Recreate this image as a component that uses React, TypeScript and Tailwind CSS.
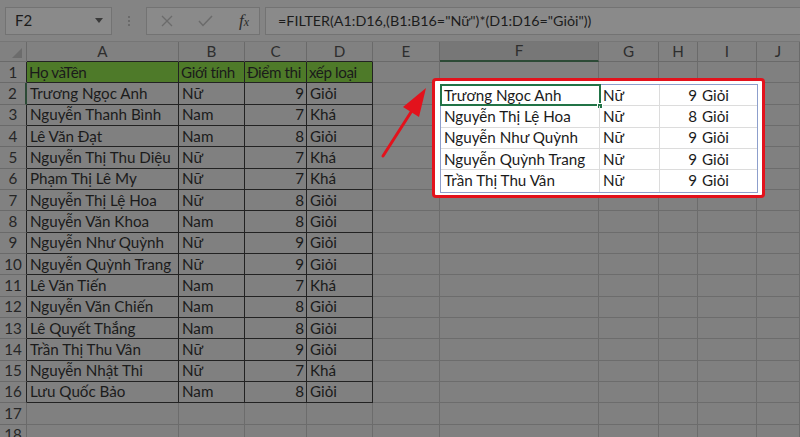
import React from 'react';

type Row = [string, string, string, string];

const data: Row[] = [
    ['Họ vàTên', 'Giới tính', 'Điểm thi', 'xếp loại'],
    ['Trương Ngọc Anh', 'Nữ', '9', 'Giỏi'],
    ['Nguyễn Thanh Bình', 'Nam', '7', 'Khá'],
    ['Lê Văn Đạt', 'Nam', '8', 'Giỏi'],
    ['Nguyễn Thị Thu Diệu', 'Nữ', '7', 'Khá'],
    ['Phạm Thị Lê My', 'Nữ', '7', 'Khá'],
    ['Nguyễn Thị Lệ Hoa', 'Nữ', '8', 'Giỏi'],
    ['Nguyễn Văn Khoa', 'Nam', '8', 'Giỏi'],
    ['Nguyễn Như Quỳnh', 'Nữ', '9', 'Giỏi'],
    ['Nguyễn Quỳnh Trang', 'Nữ', '9', 'Giỏi'],
    ['Lê Văn Tiến', 'Nam', '7', 'Khá'],
    ['Nguyễn Văn Chiến', 'Nam', '8', 'Giỏi'],
    ['Lê Quyết Thắng', 'Nam', '8', 'Giỏi'],
    ['Trần Thị Thu Vân', 'Nữ', '9', 'Giỏi'],
    ['Nguyễn Nhật Thi', 'Nữ', '7', 'Khá'],
    ['Lưu Quốc Bảo', 'Nam', '8', 'Giỏi'],
];

const filtered: Row[] = [
    ['Trương Ngọc Anh', 'Nữ', '9', 'Giỏi'],
    ['Nguyễn Thị Lệ Hoa', 'Nữ', '8', 'Giỏi'],
    ['Nguyễn Như Quỳnh', 'Nữ', '9', 'Giỏi'],
    ['Nguyễn Quỳnh Trang', 'Nữ', '9', 'Giỏi'],
    ['Trần Thị Thu Vân', 'Nữ', '9', 'Giỏi'],
];

const letters = ['A', 'B', 'C', 'D', 'E', 'F', 'G', 'H', 'I', 'J'];
const gridCols = 'grid grid-cols-[27px_152px_66px_62px_66px_67px_159px_60px_39px_59px_1fr] grid-rows-[100%] leading-none';
const font = { fontFamily: 'Lato, "Liberation Sans", sans-serif' };

const FormulaBar = () => (
    <div className="h-[41px] bg-[#848484] flex items-center pl-[5px] text-[#1c1c1c]">
        <div className="w-[107px] h-[28px] bg-[#8a8a8a] border border-[#737373] flex items-center justify-between pl-[9px] pr-[8px] text-[15px]">
            <span>F2</span>
            <span className="w-0 h-0 border-l-[4px] border-r-[4px] border-t-[5px] border-l-transparent border-r-transparent border-t-[#3a3a3a]" />
        </div>
        <div className="w-[34px] flex flex-col items-center gap-[2px]">
            <span className="w-[2px] h-[2px] bg-[#6a6a6a]" />
            <span className="w-[2px] h-[2px] bg-[#6a6a6a]" />
            <span className="w-[2px] h-[2px] bg-[#6a6a6a]" />
        </div>
        <div className="w-[114px] h-[28px] bg-[#8a8a8a] border border-[#737373] flex items-center justify-between pl-[14px] pr-[10px]">
            <svg width="12" height="12" viewBox="0 0 12 12" stroke="#6b6b6b" strokeWidth="1.3" fill="none">
                <path d="M1 1 L11 11 M11 1 L1 11" />
            </svg>
            <svg width="15" height="12" viewBox="0 0 15 12" stroke="#6b6b6b" strokeWidth="1.5" fill="none">
                <path d="M1 6 L5 10.5 L14 1" />
            </svg>
            <span className="italic text-[#2a2a2a] text-[17px] leading-none" style={{ fontFamily: '"Liberation Serif", serif' }}>f<span className="text-[12px]">x</span></span>
        </div>
        <div className="flex-1 h-[28px] ml-[5px] bg-[#8a8a8a] border border-r-0 border-[#737373] flex items-center pl-[12px] text-[14.3px] whitespace-nowrap">
            =FILTER(A1:D16,(B1:B16="Nữ")*(D1:D16="Giỏi"))
        </div>
    </div>
);

const Sheet = () => {
    const rows = Array.from({ length: 18 }, (_, i) => i + 1);
    return (
        <div className="text-[15.2px] text-[#1b1b1b]">
            <div className={`${gridCols} h-[21px] bg-[#818181] text-[#2e2e2e] border-t border-[#767676]`}>
                <div className="relative border-r border-b border-[#6a6a6a]">
                    <svg className="absolute right-[4px] bottom-[3px]" width="10" height="10" viewBox="0 0 10 10"><path d="M10 0 L10 10 L0 10 Z" fill="#6c6c6c" /></svg>
                </div>
                {letters.map((l, i) => (
                    <div key={l} className={`flex items-center justify-center border-r border-[#6a6a6a] ${l === 'F' ? 'bg-[#777777] border-b-2 border-b-[#2c4a36]' : i < 4 ? 'border-b border-b-[#222]' : 'border-b border-b-[#6a6a6a]'}`}>{l}</div>
                ))}
            </div>
            {rows.map(r => {
                const rowData = data[r - 1];
                const inTable = r <= 16;
                return (
                    <div key={r} className={`${gridCols} h-[21.33px]`}>
                        <div className={`flex items-center justify-center bg-[#818181] text-[#262626] border-b border-[#6a6a6a] ${r === 2 ? 'bg-[#777777] border-r-2 border-r-[#2c4a36]' : inTable ? 'border-r border-r-[#222]' : 'border-r border-r-[#6a6a6a]'}`}>{r}</div>
                        {letters.map((l, ci) => {
                            const tableCell = inTable && ci < 4;
                            const text = tableCell ? rowData[ci] : '';
                            const right = tableCell && ci === 2 && r > 1;
                            return (
                                <div key={l} className={`flex items-center overflow-hidden whitespace-nowrap border-r border-b ${tableCell ? 'border-[#222]' : 'border-[#6c6c6c]'} ${tableCell && r === 1 ? 'bg-[#4e7a29] tracking-[-0.4px] pl-[2px]' : 'bg-[#808080]'} ${right ? 'justify-end pr-[2px]' : r === 1 && tableCell ? '' : 'pl-[3px]'}`}>{text}</div>
                            );
                        })}
                    </div>
                );
            })}
        </div>
    );
};

const Highlight = () => (
    <div className="absolute left-[432px] top-[78px] w-[333px] h-[120px] bg-white border-[3px] border-[#e3121c] rounded-[4px] pl-[5px] pt-[3px] text-[15.2px] text-[#1b1b1b] leading-none">
        <div className="w-[318px] border border-[#8d9fcc]">
            {filtered.map((row, ri) => (
                <div key={ri} className={`grid grid-cols-[159px_60px_39px_58px] grid-rows-[100%] h-[21.33px] ${ri < 4 ? 'border-b border-[#dcdcdc]' : ''}`}>
                    <div className={`relative flex items-center pl-[3px] whitespace-nowrap border-r border-[#dcdcdc] ${ri === 0 ? 'outline-2 outline-[#217346] -outline-offset-1' : ''}`}>
                        {row[0]}
                        {ri === 0 && <span className="absolute -right-[4px] -bottom-[4px] w-[6px] h-[6px] bg-[#217346] border border-white" />}
                    </div>
                    <div className="flex items-center pl-[3px] border-r border-[#dcdcdc]">{row[1]}</div>
                    <div className="flex items-center justify-end pr-[2px]">{row[2]}</div>
                    <div className="flex items-center pl-[3px]">{row[3]}</div>
                </div>
            ))}
        </div>
    </div>
);

const Arrow = () => (
    <svg className="absolute left-[375px] top-[80px]" width="60" height="85" viewBox="0 0 60 85">
        <line x1="8" y1="76" x2="38" y2="29" stroke="#e3121c" strokeWidth="3" strokeLinecap="round" />
        <polygon points="51,8 44,37 28,27" fill="#e3121c" />
    </svg>
);

export default function App() {
    return (
        <div className="relative w-[800px] h-[437px] overflow-hidden bg-[#808080]" style={font}>
            <FormulaBar />
            <Sheet />
            <Highlight />
            <Arrow />
        </div>
    );
}
